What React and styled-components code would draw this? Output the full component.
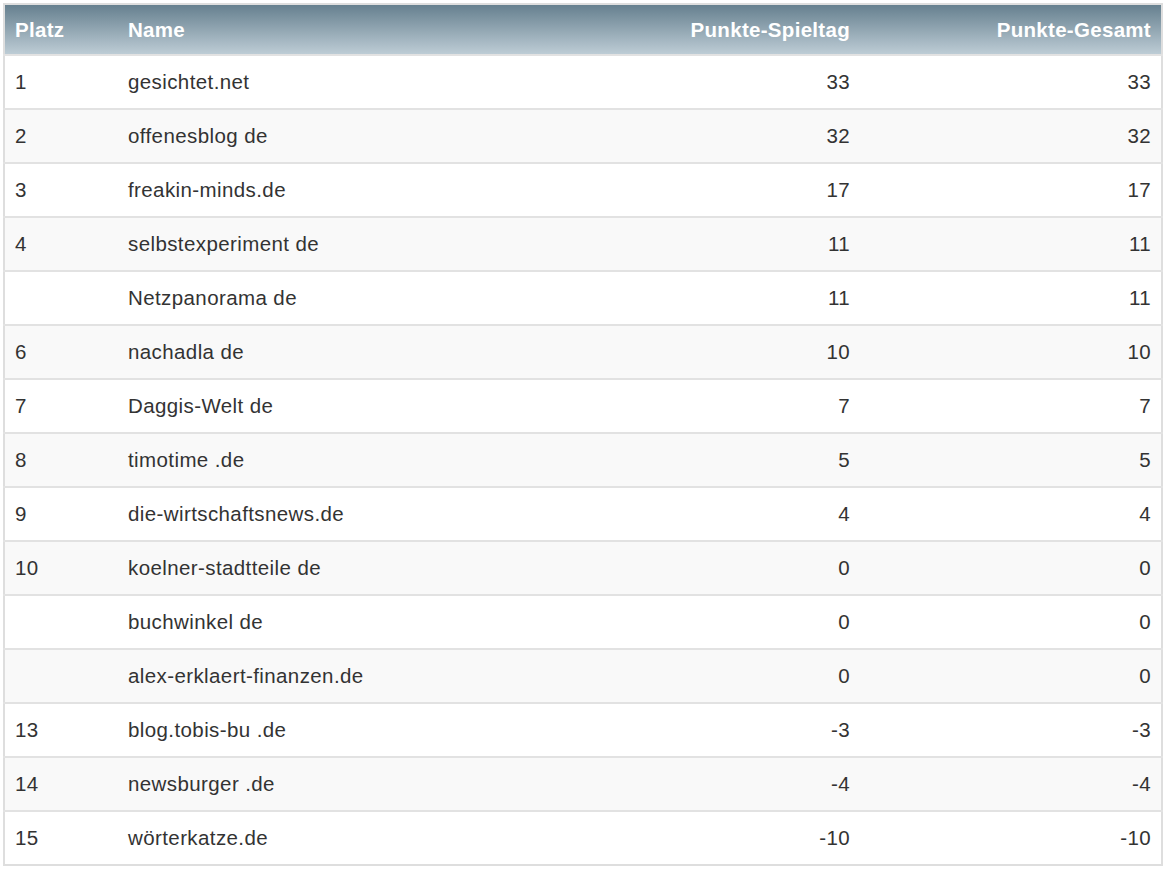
import React from "react";
import styled, { createGlobalStyle } from "styled-components";

const Global = createGlobalStyle`
  body { margin: 0; padding: 3px; background: #fff; font-family: "Liberation Sans", Arial, sans-serif; }
`;

const Table = styled.table`
  width: 1160px;
  border-collapse: collapse;
  border: 2px solid #dedede;
  font-size: 20.5px;
  letter-spacing: 0.4px;
  color: #333;
`;
const Th = styled.th`
  height: 49px;
  padding: 0 10px;
  color: #fff;
  font-weight: bold;
  font-size: 20.5px;
  letter-spacing: 0.3px;
  text-align: ${p => (p.$right ? "right" : "left")};
  background: linear-gradient(to bottom, #66808f, #bdccd5);
  width: ${p => p.$w || "auto"};
`;
const Tr = styled.tr`
  background: ${p => (p.$alt ? "#f9f9f9" : "#fff")};
  border-top: 2px solid #e2e2e2;
`;
const Td = styled.td`
  height: 52px;
  padding: 0 10px;
  text-align: ${p => (p.$right ? "right" : "left")};
`;

const rows = [
  ["1", "gesichtet.net", 33],
  ["2", "offenesblog de", 32],
  ["3", "freakin-minds.de", 17],
  ["4", "selbstexperiment de", 11],
  ["", "Netzpanorama de", 11],
  ["6", "nachadla de", 10],
  ["7", "Daggis-Welt de", 7],
  ["8", "timotime .de", 5],
  ["9", "die-wirtschaftsnews.de", 4],
  ["10", "koelner-stadtteile de", 0],
  ["", "buchwinkel de", 0],
  ["", "alex-erklaert-finanzen.de", 0],
  ["13", "blog.tobis-bu .de", -3],
  ["14", "newsburger .de", -4],
  ["15", "wörterkatze.de", -10],
];

export default function App() {
  return (
    <>
      <Global />
      <Table>
        <thead>
          <tr>
            <Th $w="93px">Platz</Th>
            <Th $w="440px">Name</Th>
            <Th $right $w="262px">Punkte-Spieltag</Th>
            <Th $right>Punkte-Gesamt</Th>
          </tr>
        </thead>
        <tbody>
          {rows.map((r, i) => (
            <Tr key={i} $alt={i % 2 === 1}>
              <Td>{r[0]}</Td>
              <Td>{r[1]}</Td>
              <Td $right>{r[2]}</Td>
              <Td $right>{r[2]}</Td>
            </Tr>
          ))}
        </tbody>
      </Table>
    </>
  );
}
